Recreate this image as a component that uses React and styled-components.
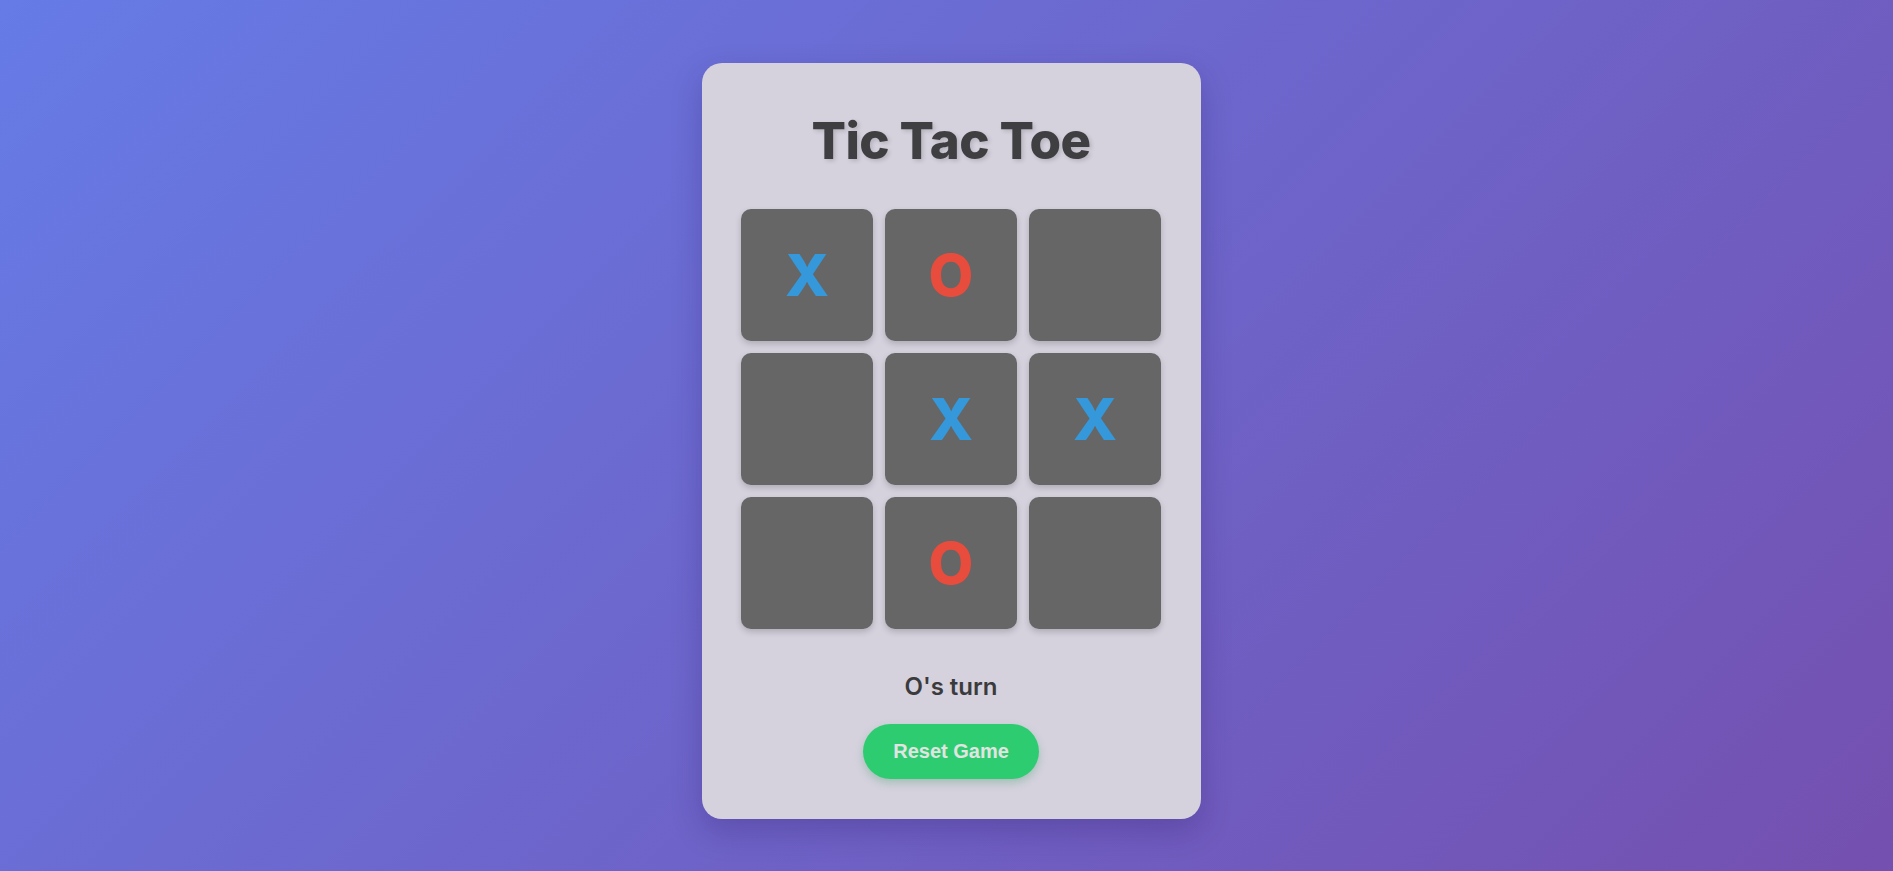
import React, { useState } from 'react';
import styled, { createGlobalStyle } from 'styled-components';

const GlobalStyle = createGlobalStyle`
  html, body {
    margin: 0;
    padding: 0;
  }
  body {
    font-family: Inter, "Noto Sans", sans-serif;
    background: linear-gradient(135deg, #667be6 0%, #7450b0 100%);
    min-height: 100vh;
  }
`;

const Page = styled.div`
  display: flex;
  justify-content: center;
  align-items: flex-start;
  min-height: 871px;
  padding: 63px 0 0 9px;
  box-sizing: border-box;
`;

const Card = styled.div`
  width: 499px;
  box-sizing: border-box;
  padding: 40px 40px 40px;
  border-radius: 20px;
  background-color: #d5d2de;
  box-shadow: 0 12px 30px rgba(40, 20, 90, 0.25);
  display: flex;
  flex-direction: column;
  align-items: center;
`;

const Title = styled.h1`
  margin: 7px 0 37px;
  font-size: 51px;
  font-weight: 800;
  letter-spacing: -0.6px;
  line-height: 62px;
  color: #3f3f42;
  text-shadow: 2px 2px 4px rgba(0, 0, 0, 0.15);
`;

const Board = styled.div`
  display: grid;
  grid-template-columns: repeat(3, 132px);
  grid-template-rows: repeat(3, 132px);
  gap: 12px;
`;

const Cell = styled.button`
  border: none;
  border-radius: 10px;
  background-color: #666666;
  box-shadow: 0 3px 6px rgba(0, 0, 0, 0.18);
  font-family: Inter, "Noto Sans", sans-serif;
  font-size: 58px;
  font-weight: 800;
  line-height: 1;
  color: ${p => (p.$mark === 'X' ? '#3498db' : '#e74c3c')};
  display: flex;
  align-items: center;
  justify-content: center;
  padding: 0;
  cursor: pointer;
`;

const Status = styled.p`
  margin: 43px 0 23px;
  font-size: 24px;
  font-weight: 600;
  line-height: 29px;
  color: #3b3b3d;
`;

const ResetButton = styled.button`
  width: 176px;
  height: 55px;
  border: none;
  border-radius: 28px;
  background-color: #2ecc71;
  color: #e2e4e2;
  font-family: "Liberation Sans", Arial, sans-serif;
  font-size: 20px;
  font-weight: 700;
  box-shadow: 0 4px 8px rgba(46, 150, 90, 0.3);
  cursor: pointer;
`;

const initial = ['X', 'O', '', '', 'X', 'X', '', 'O', ''];

export default function App() {
  const [cells, setCells] = useState(initial);
  const xCount = cells.filter(c => c === 'X').length;
  const oCount = cells.filter(c => c === 'O').length;
  const turn = xCount > oCount ? 'O' : 'X';

  const play = i => {
    if (cells[i]) return;
    const next = cells.slice();
    next[i] = turn;
    setCells(next);
  };

  return (
    <>
      <GlobalStyle />
      <Page>
        <Card>
          <Title>Tic Tac Toe</Title>
          <Board>
            {cells.map((c, i) => (
              <Cell key={i} $mark={c} onClick={() => play(i)}>
                {c}
              </Cell>
            ))}
          </Board>
          <Status>{turn}'s turn</Status>
          <ResetButton onClick={() => setCells(Array(9).fill(''))}>Reset Game</ResetButton>
        </Card>
      </Page>
    </>
  );
}
